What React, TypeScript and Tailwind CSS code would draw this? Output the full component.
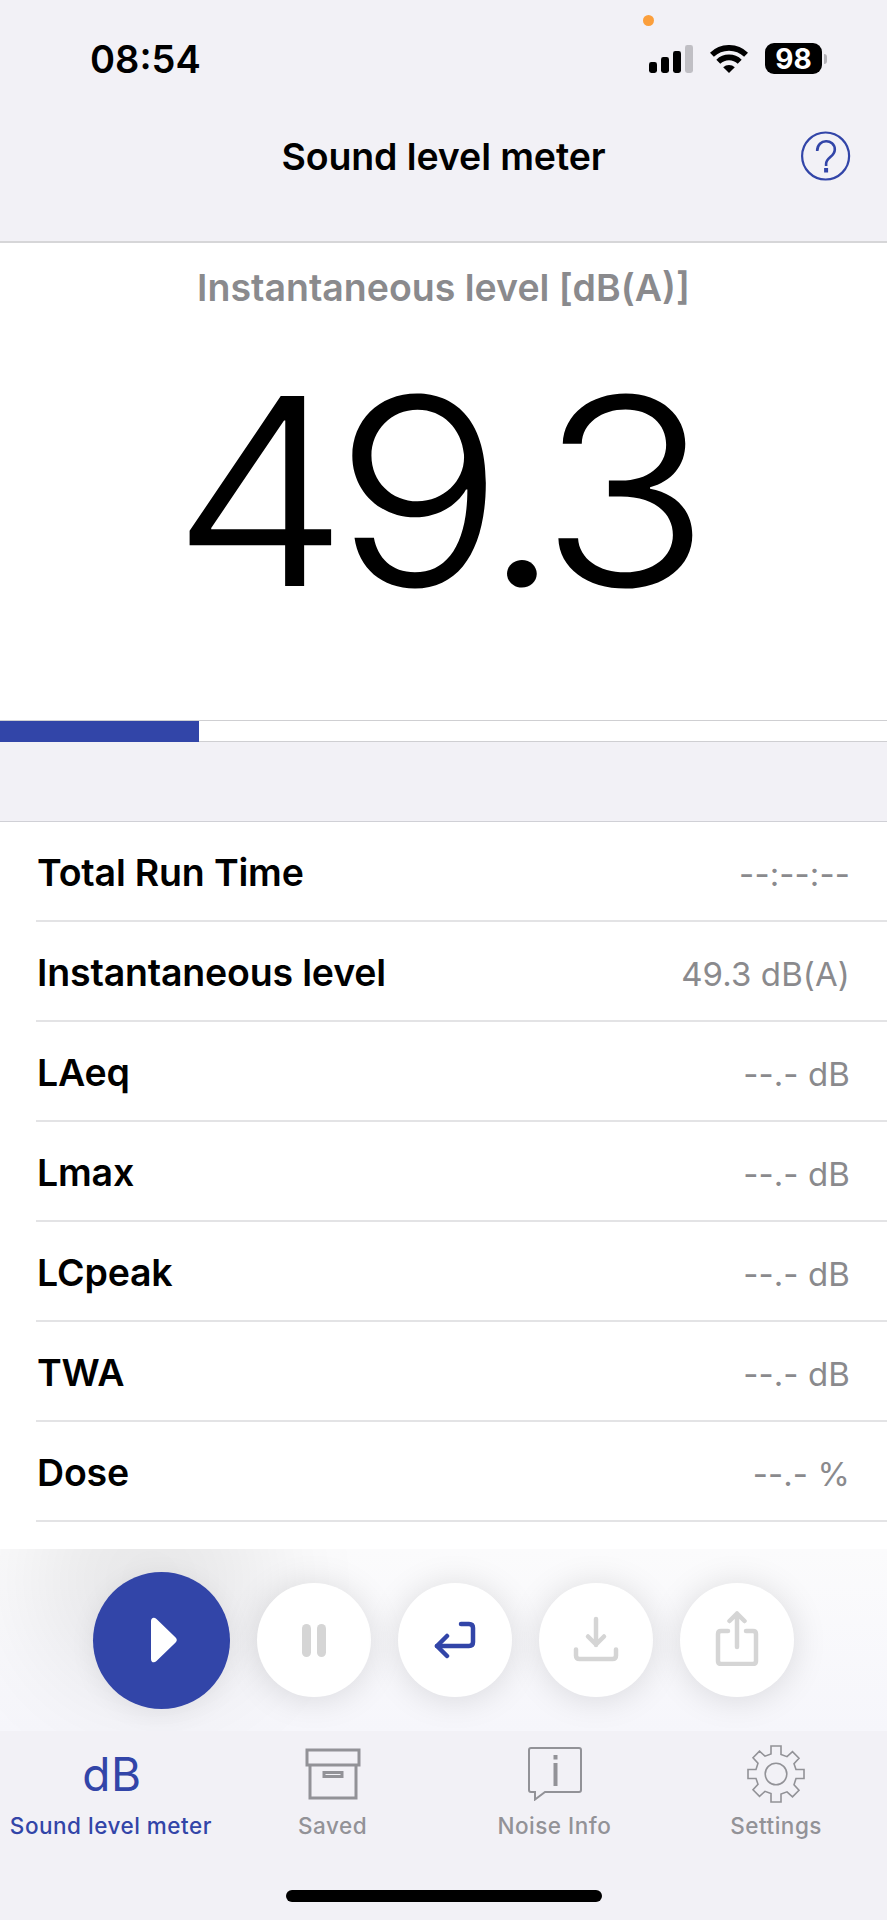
import type { ReactNode } from "react";

interface Reading {
  label: string;
  value: string;
}

const readings: Reading[] = [
  { label: "Total Run Time", value: "--:--:--" },
  { label: "Instantaneous level", value: "49.3 dB(A)" },
  { label: "LAeq", value: "--.- dB" },
  { label: "Lmax", value: "--.- dB" },
  { label: "LCpeak", value: "--.- dB" },
  { label: "TWA", value: "--.- dB" },
  { label: "Dose", value: "--.- %" },
];

function StatusBar() {
  return (
    <div className="relative flex h-[118px] items-center justify-between pl-[90px] pr-[60px]">
      <span className="text-[38px] font-semibold leading-none">08:54</span>
      <span className="absolute left-[643px] top-[15px] size-[11px] rounded-full bg-[#fb9f3c]" />
      <div className="flex items-center">
        <svg width="44" height="28" viewBox="0 0 44 28">
          <rect x="0" y="17" width="8" height="11" rx="2.4" />
          <rect x="12" y="12" width="8" height="16" rx="2.4" />
          <rect x="24" y="6" width="8" height="22" rx="2.4" />
          <rect x="36" y="0" width="8" height="28" rx="2.4" fill="#c0bfc4" />
        </svg>
        <svg className="ml-[17px]" width="38" height="28" viewBox="0 0 38 28">
          <path d="M1.900 9.800a24.500 24.500 0 0 1 34.200 0" fill="none" stroke="#000" strokeWidth="5.700" />
          <path d="M8.300 16.700a15.500 15.500 0 0 1 21.400 0" fill="none" stroke="#000" strokeWidth="5.700" />
          <path d="M13.200 22.300a8.800 8.800 0 0 1 11.600 0L19 28Z" />
        </svg>
        <span className="ml-[17px] flex h-[31px] w-[57px] items-center justify-center rounded-[9px] bg-black text-[28px] font-bold leading-none text-white">
          98
        </span>
        <span className="ml-[2px] h-[10px] w-[3px] rounded-r-full bg-[#b4b3b8]" />
      </div>
    </div>
  );
}

function RoundButton({ label, children }: { label: string; children: ReactNode }) {
  return (
    <button
      aria-label={label}
      className="flex size-[114px] items-center justify-center rounded-full bg-white shadow-[0_2px_34px_rgba(0,0,0,0.13)]"
    >
      {children}
    </button>
  );
}

function Controls() {
  return (
    <div className="flex h-[182px] items-center overflow-hidden bg-[linear-gradient(to_bottom,#fbfbfc,#f6f6fb)] pl-[93px]">
      <div className="flex items-center gap-[27px]">
        <button
          aria-label="Play"
          className="flex size-[137px] items-center justify-center rounded-full bg-[#3245a8] pl-[4px] shadow-[0_4px_26px_rgba(0,0,0,0.07),-10px_-60px_110px_50px_rgba(0,0,0,0.08)]"
        >
          <svg width="26" height="46" viewBox="0 0 26 46" fill="#fff">
            <path d="M0 4C0 .6 3-.5 5.500 2L24.600 20.500Q27 23 24.600 25.500L5.500 44C3 46.500 0 45.400 0 42Z" />
          </svg>
        </button>
        <div className="flex gap-[27px]">
          <RoundButton label="Pause">
            <span className="flex gap-[6px] pr-px">
              <span className="h-[33px] w-[9px] rounded-full bg-[#d5d5d5]" />
              <span className="h-[33px] w-[9px] rounded-full bg-[#d5d5d5]" />
            </span>
          </RoundButton>
          <RoundButton label="Reset">
            <svg width="42" height="38" viewBox="0 0 42 38" fill="none" stroke="#3245a8" strokeWidth="4.500" strokeLinecap="round" strokeLinejoin="round">
              <path d="M27 3h8q4 0 4 4v14q0 4-4 4H3" />
              <path d="M13 15 3 25l10 10" />
            </svg>
          </RoundButton>
          <RoundButton label="Save">
            <svg className="mb-[3px] mr-px" width="46" height="46" viewBox="0 0 46 46" fill="none" stroke="#d5d5d5" strokeWidth="4.500" strokeLinecap="round" strokeLinejoin="round">
              <path d="M23 3v26M15 20.500l8 8 8-8M3 33.500v6q0 3.500 3.500 3.500h33q3.500 0 3.500-3.500v-6" />
            </svg>
          </RoundButton>
          <RoundButton label="Share">
            <svg className="mb-[4px] mr-px" width="44" height="56" viewBox="0 0 44 56" fill="none" stroke="#d5d5d5" strokeWidth="4.500" strokeLinecap="round" strokeLinejoin="round">
              <path d="M22 37V3.500M14.500 11 22 3.500l7.500 7.500M13 21H6q-3 0-3 3v27q0 3 3 3h32q3 0 3-3V24q0-3-3-3h-7" />
            </svg>
          </RoundButton>
        </div>
      </div>
    </div>
  );
}

function Tab({ label, active, children }: { label: string; active?: boolean; children: ReactNode }) {
  return (
    <div className={active ? "flex flex-1 flex-col items-center text-[#3245a8]" : "flex flex-1 flex-col items-center text-[#929297]"}>
      <div className="flex h-[83px] items-center justify-center pt-[3px]">{children}</div>
      <span className="whitespace-nowrap text-[22.500px] font-medium leading-[24px] tracking-[0.500px]">{label}</span>
    </div>
  );
}

function TabBar() {
  return (
    <nav className="flex h-[189px] flex-col justify-between pb-[18px]">
      <div className="flex">
        <Tab label="Sound level meter" active>
          <span className="pl-[2px] text-[46px] leading-none tracking-[0.500px]">dB</span>
        </Tab>
        <Tab label="Saved">
          <svg width="56" height="52" viewBox="0 0 56 52" fill="none" stroke="currentColor" strokeWidth="3">
            <path d="M2 2h52v15H2ZM5 17v33h46V17M19 24.500h18v4H19Z" />
          </svg>
        </Tab>
        <Tab label="Noise Info">
          <svg className="ml-[2px]" width="54" height="54" viewBox="0 0 54 54" fill="none" stroke="currentColor" strokeWidth="2">
            <path d="M3 1h48q2 0 2 2v40q0 2-2 2H17L7 52.500V45H3q-2 0-2-2V3q0-2 2-2Z" />
            <path d="M27.500 8v4.500M27.500 16v23" strokeWidth="4" />
          </svg>
        </Tab>
        <Tab label="Settings">
          <svg width="58" height="58" viewBox="0 0 58 58" fill="none" stroke="currentColor" strokeWidth="1.600">
            <path d="M24 1h10v8.500l6 2.200 5.500-5 6.500 6.500-5 5.500 2 5.800h8v9h-8l-2 6.300 5 5.500-6.500 6.500-5.500-5-6 2.200V57H24v-8.500l-6-2.200-5.500 5L6 44.800l5-5.500-2-5.800H1v-9h8l2-6.300-5-5.500 6.500-6.500 5.500 5 6-2.200Z" />
            <circle cx="29" cy="29" r="10.800" />
          </svg>
        </Tab>
      </div>
      <div className="h-[12px] w-[316px] self-center rounded-full bg-black" />
    </nav>
  );
}

export default function App() {
  return (
    <div className="flex h-[1920px] w-[887px] flex-col overflow-hidden bg-[#f2f1f6] font-[Inter,'Liberation_Sans',sans-serif] text-black">
      <StatusBar />
      <header className="relative flex h-[123px] justify-center pt-[16px]">
        <h1 className="text-[37.500px] font-semibold leading-[46px] tracking-[-0.100px]">Sound level meter</h1>
        <svg className="absolute right-[36px] top-[13px]" width="50" height="50" viewBox="0 0 50 50" fill="none" stroke="#3245a8" strokeWidth="2.200">
          <circle cx="24.600" cy="25" r="23.500" />
          <path d="M16.200 20c0-13 17.600-12.500 17.600-1.500 0 7.500-8.700 7.500-8.700 14.500v2" strokeWidth="2.600" />
          <path d="M25.100 37v4.500" strokeWidth="4" />
        </svg>
      </header>

      <section className="h-[479px] border-t-2 border-[#d6d6d8] bg-white text-center">
        <h2 className="pt-[22px] text-[37.500px] font-semibold leading-[46px] text-[#8a8a8d]">Instantaneous level [dB(A)]</h2>
        <div className="mt-[50px] flex justify-center pr-[19px]">
          <span className="scale-x-[1.08] text-[261px] font-light leading-[260px] tracking-[-13.500px]">49.3</span>
        </div>
      </section>
      <div className="h-[22px] border-y border-[#cfcfd2] bg-white">
        <div className="h-[21px] w-[199px] bg-[#3245a8]" />
      </div>

      <ul className="mt-[79px] h-[729px] border-t border-[#d0d0d6] bg-white pl-[36px]">
        {readings.map(({ label, value }) => (
          <li key={label} className="flex h-[100px] items-baseline justify-between border-b-2 border-[#e3e3e5] pl-px pr-[37px] pt-[28px] leading-[46px]">
            <span className="text-[37.500px] font-semibold tracking-[-0.180px]">{label}</span>
            <span className="text-[33px] tracking-[0.100px] text-[#8a8a8d]">{value}</span>
          </li>
        ))}
      </ul>

      <Controls />
      <TabBar />
    </div>
  );
}
